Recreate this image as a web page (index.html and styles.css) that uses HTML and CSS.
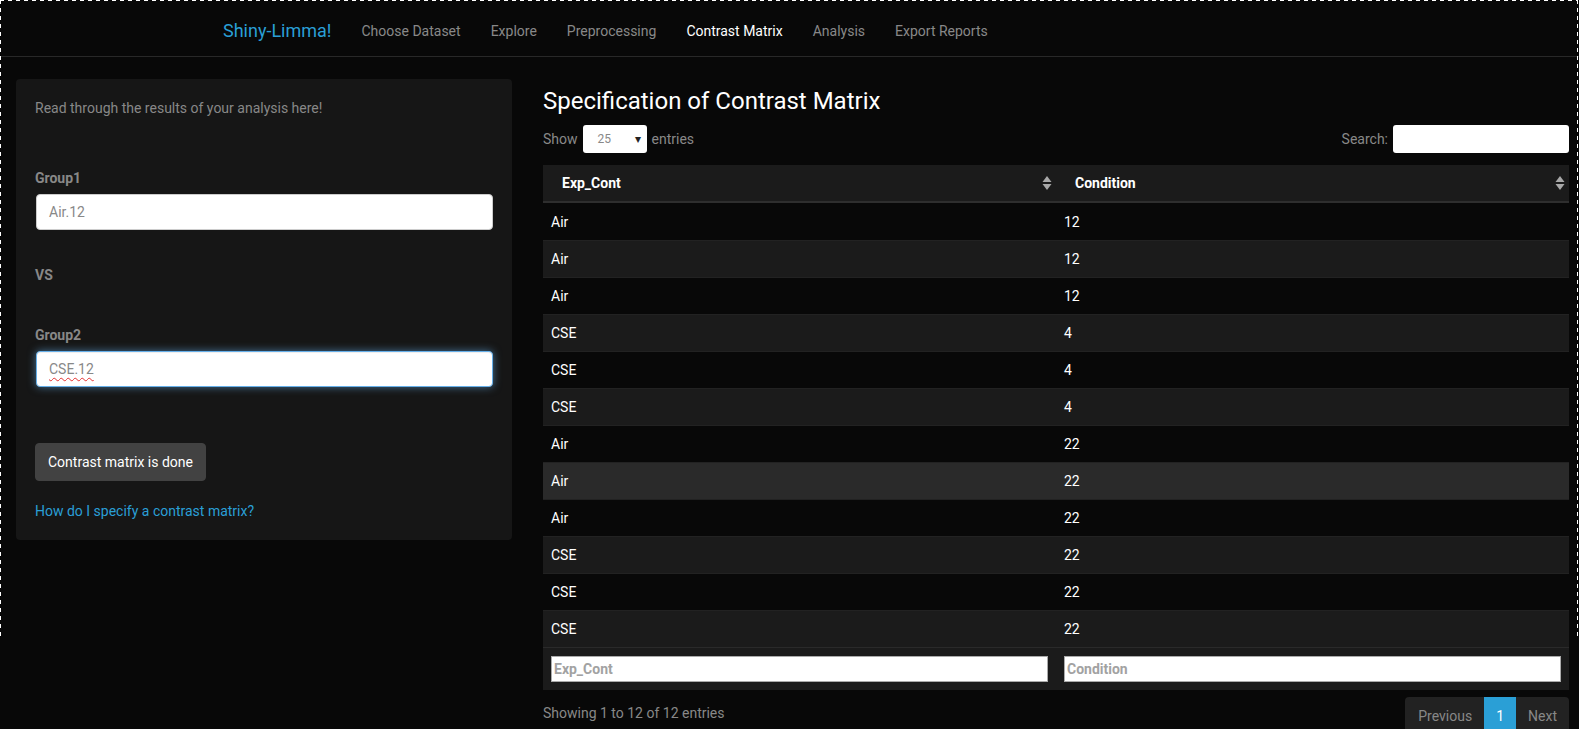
FILE: index.html
```html
<!DOCTYPE html>
<html lang="en">
<head>
<meta charset="utf-8">
<title>Shiny-Limma!</title>
<link rel="stylesheet" href="styles.css">
</head>
<body>
<div class="focus-outline"></div>
<nav class="navbar">
  <a class="brand">Shiny-Limma!</a>
  <ul class="nav">
    <li><a>Choose Dataset</a></li>
    <li><a>Explore</a></li>
    <li><a>Preprocessing</a></li>
    <li class="active"><a>Contrast Matrix</a></li>
    <li><a>Analysis</a></li>
    <li><a>Export Reports</a></li>
  </ul>
</nav>
<main class="page">
  <aside class="sidebar">
    <div class="well">
      <p class="intro">Read through the results of your analysis here!</p>
      <label class="label label-g1">Group1</label>
      <div class="form-control">Air.12</div>
      <div class="vs">VS</div>
      <label class="label label-g2">Group2</label>
      <div class="form-control focused"><span class="misspelled">CSE.12</span></div>
      <button class="btn">Contrast matrix is done</button>
      <a class="help-link">How do I specify a contrast matrix?</a>
    </div>
  </aside>
  <section class="content">
    <h3 class="title">Specification of Contrast Matrix</h3>
    <div class="dt-top">
      <div class="dt-length">
        <span>Show</span>
        <div class="select"><span class="sel-val">25</span><span class="sel-arrow">&#9662;</span></div>
        <span>entries</span>
      </div>
      <div class="dt-search">
        <span>Search:</span>
        <div class="search-input"></div>
      </div>
    </div>
    <table class="dt">
      <thead>
        <tr>
          <th><div class="th-in"><span>Exp_Cont</span><svg class="sort" width="10" height="14" viewBox="0 0 10 14"><path d="M5 0 L9.5 6 L0.5 6 Z" fill="#a8a8a8"/><path d="M5 14 L9.5 8 L0.5 8 Z" fill="#a8a8a8"/></svg></div></th>
          <th><div class="th-in"><span>Condition</span><svg class="sort" width="10" height="14" viewBox="0 0 10 14"><path d="M5 0 L9.5 6 L0.5 6 Z" fill="#a8a8a8"/><path d="M5 14 L9.5 8 L0.5 8 Z" fill="#a8a8a8"/></svg></div></th>
        </tr>
      </thead>
      <tbody>
        <tr><td>Air</td><td>12</td></tr>
        <tr class="stripe"><td>Air</td><td>12</td></tr>
        <tr><td>Air</td><td>12</td></tr>
        <tr class="stripe"><td>CSE</td><td>4</td></tr>
        <tr><td>CSE</td><td>4</td></tr>
        <tr class="stripe"><td>CSE</td><td>4</td></tr>
        <tr><td>Air</td><td>22</td></tr>
        <tr class="hover"><td>Air</td><td>22</td></tr>
        <tr><td>Air</td><td>22</td></tr>
        <tr class="stripe"><td>CSE</td><td>22</td></tr>
        <tr><td>CSE</td><td>22</td></tr>
        <tr class="stripe"><td>CSE</td><td>22</td></tr>
      </tbody>
      <tfoot>
        <tr>
          <td><input class="filter" type="text" placeholder="Exp_Cont"></td>
          <td><input class="filter" type="text" placeholder="Condition"></td>
        </tr>
      </tfoot>
    </table>
    <div class="dt-bottom">
      <div class="dt-info">Showing 1 to 12 of 12 entries</div>
      <ul class="pagination">
        <li class="disabled"><a>Previous</a></li>
        <li class="current"><a>1</a></li>
        <li class="disabled"><a>Next</a></li>
      </ul>
    </div>
  </section>
</main>
</body>
</html>
```
FILE: styles.css
```css
* { box-sizing: border-box; }
html, body {
  margin: 0;
  padding: 0;
  background: #080808;
}
body {
  font-family: Roboto, "Liberation Sans", Arial, sans-serif;
  font-size: 14px;
  line-height: 20px;
  color: #888;
  position: relative;
  overflow: hidden;
  height: 729px;
}
.focus-outline {
  position: absolute;
  top: 0;
  left: 0;
  width: 1578px;
  height: 638px;
  pointer-events: none;
  z-index: 10;
  background:
    repeating-linear-gradient(to right, #fff 0 4px, transparent 4px 8px) top left / 100% 1px no-repeat,
    repeating-linear-gradient(to bottom, #fff 0 4px, transparent 4px 8px) top left / 1px 100% no-repeat,
    repeating-linear-gradient(to bottom, #fff 0 4px, transparent 4px 8px) top right / 1px 100% no-repeat;
}
.navbar {
  display: flex;
  align-items: flex-start;
  height: 57px;
  border-bottom: 1px solid #282828;
  padding-left: 208px;
}
.brand {
  font-size: 18px;
  line-height: 20px;
  padding: 21px 15px 15px;
  color: #2a9fd6;
}
.nav {
  display: flex;
  list-style: none;
  margin: 0;
  padding: 0;
}
.nav a {
  display: block;
  padding: 21px 15px 15px;
  color: #888;
}
.nav .active a { color: #fff; }

.page {
  display: flex;
  align-items: flex-start;
  padding: 22px 0 0 16px;
  gap: 31px;
}
.sidebar { width: 496px; flex: none; }
.well {
  background: #161616;
  border-radius: 4px;
  padding: 19px;
  display: flex;
  flex-direction: column;
  align-items: flex-start;
}
.intro { margin: 0; }
.label {
  font-weight: 700;
  color: #888;
  margin-bottom: 6px;
}
.label-g1 { margin-top: 50px; }
.form-control {
  width: 457px;
  height: 36px;
  margin-left: 1px;
  background: #fff;
  border: 1px solid #ccc;
  border-radius: 4px;
  padding: 7px 12px;
  color: #888;
  line-height: 20px;
}
.form-control.focused {
  border-color: #66afe9;
  box-shadow: inset 0 1px 1px rgba(0,0,0,.075), 0 0 8px rgba(102,175,233,.6);
}
.misspelled {
  text-decoration: underline wavy #e53030;
  text-decoration-thickness: 1px;
  text-underline-offset: 3px;
}
.vs {
  font-weight: 700;
  margin-top: 35px;
}
.label-g2 { margin-top: 40px; }
.btn {
  margin-top: 56px;
  font-family: inherit;
  font-size: 14px;
  line-height: 20px;
  color: #fff;
  background: #424242;
  border: 1px solid #424242;
  border-radius: 4px;
  padding: 8px 12px;
}
.help-link {
  margin-top: 20px;
  color: #2a9fd6;
}

.content {
  width: 1026px;
  flex: none;
}
.title {
  margin: 9px 0 0;
  font-size: 24px;
  line-height: 26px;
  font-weight: 400;
  color: #fff;
}
.dt-top {
  display: flex;
  justify-content: space-between;
  align-items: center;
  margin-top: 11px;
  height: 28px;
}
.dt-length, .dt-search {
  display: flex;
  align-items: center;
  gap: 5px;
}
.select {
  width: 64px;
  height: 28px;
  background: #fff;
  border-radius: 3px;
  display: flex;
  align-items: center;
  justify-content: space-between;
  padding: 0 6px 0 15px;
  font-size: 12px;
  color: #888;
}
.sel-arrow { color: #222; font-size: 12px; }
.search-input {
  width: 176px;
  height: 28px;
  background: #fff;
  border-radius: 3px;
}
.dt {
  width: 100%;
  margin-top: 12px;
  border-collapse: collapse;
  table-layout: fixed;
  color: #fff;
}
.dt th {
  background: #1b1b1b;
  text-align: left;
  font-weight: 700;
  padding: 8px 4px 8px 19px;
  border-bottom: 2px solid #2e2e2e;
}
.th-in {
  display: flex;
  justify-content: space-between;
  align-items: center;
}
.sort { display: block; }
.dt td {
  padding: 8px 8px;
  border-top: 1px solid #222;
}
.dt tbody tr { background: #080808; }
.dt tbody tr.stripe { background: #1b1b1b; }
.dt tbody tr.hover { background: #2a2a2a; }
.dt tbody tr:first-child td { border-top: none; padding-top: 9px; }
.dt tfoot td {
  background: #1b1b1b;
  border-top: 1px solid #2a2a2a;
}
.filter {
  display: block;
  width: 100%;
  height: 26px;
  margin: 0;
  border: 1px solid #aaa;
  border-radius: 0;
  padding: 1px 2px;
  font-family: inherit;
  font-size: 14px;
  font-weight: 700;
  background: #fff;
}
.filter::placeholder { color: #a2a2a2; }
.dt-bottom {
  display: flex;
  justify-content: space-between;
  align-items: flex-start;
  margin-top: 7px;
}
.dt-info { padding-top: 6px; }
.pagination {
  display: flex;
  list-style: none;
  margin: 0;
  padding: 0;
}
.pagination a {
  display: block;
  padding: 9px 12px;
  line-height: 20px;
  background: #222;
  color: #888;
}
.pagination li:first-child a { border-top-left-radius: 4px; padding-left: 13px; }
.pagination li:last-child a { border-top-right-radius: 4px; }
.pagination .current a { background: #2a9fd6; color: #fff; }
```
